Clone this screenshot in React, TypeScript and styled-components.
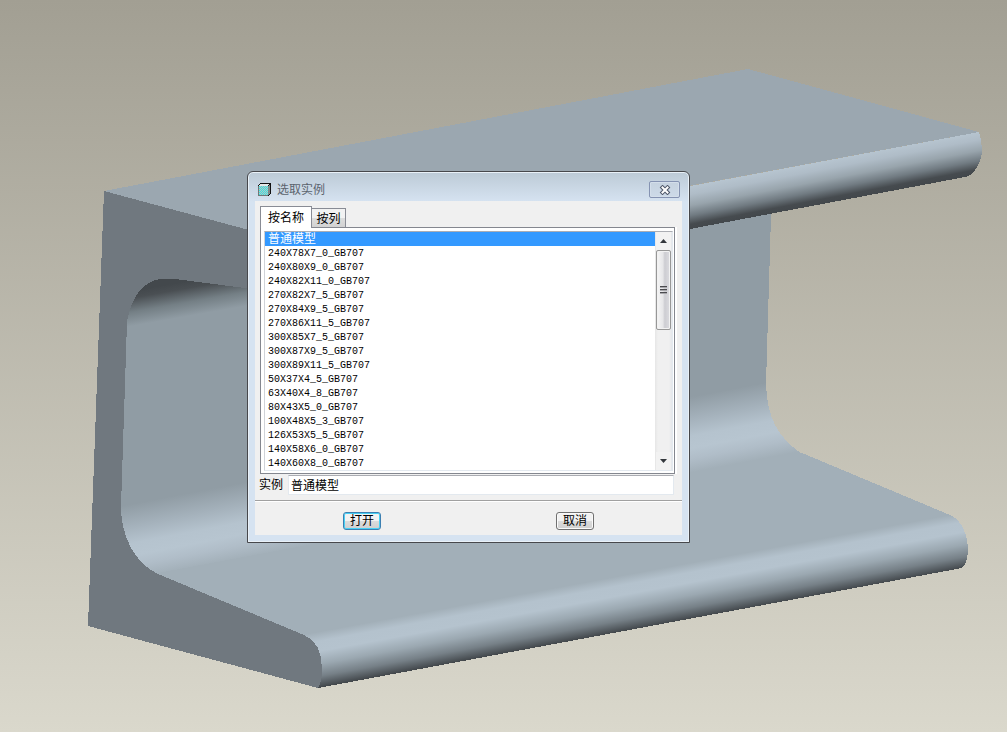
import React, { useState } from "react";
import styled, { createGlobalStyle } from "styled-components";

const GlobalStyle = createGlobalStyle`
  * { box-sizing: border-box; }
  html, body { margin: 0; padding: 0; }
  body, button, input {
    font-family: "Liberation Sans", "Noto Sans CJK SC", sans-serif;
    font-size: 12px;
    color: #000;
  }
`;

const Workspace = styled.main`
  position: relative;
  min-height: 100vh;
  overflow: hidden;
  background: linear-gradient(#a29f93, #dad8cc);
`;

const Viewport = styled.svg`
  position: absolute;
  inset: 0;
  width: 100%;
  height: 100%;
`;

const Dialog = styled.section`
  position: absolute;
  left: 247px;
  top: 171px;
  width: 443px;
  display: flex;
  flex-direction: column;
  padding: 0 6px 6px;
  border: 1px solid #47484c;
  border-radius: 6px 6px 0 0;
  background: linear-gradient(#bccad6, #d6e3f1 30px);
  box-shadow: inset 0 0 0 1px #e9f1f8;
`;

const TitleBar = styled.header`
  display: flex;
  align-items: center;
  gap: 5px;
  height: 29px;
  padding: 6px 3px 0 3px;
`;

const Title = styled.h1`
  flex: 1;
  margin: 0;
  font-size: 12px;
  line-height: 16px;
  font-weight: 400;
  color: #5b646e;
`;

const CloseButton = styled.button`
  display: flex;
  align-items: center;
  justify-content: center;
  width: 31px;
  height: 17px;
  padding: 0;
  border: 1px solid #8593b2;
  border-radius: 2px;
  background: linear-gradient(#c5d2df, #cddae8);
  box-shadow: inset 0 0 0 1px #d3deea;
`;

const Body = styled.div`
  display: flex;
  flex-direction: column;
  margin: 0 1px 1px;
  background: #f0f0f0;
`;

const Tabs = styled.div`
  display: flex;
  align-items: flex-end;
  padding: 5px 5px 0;
`;

const Tab = styled.button<{ $active: boolean }>`
  position: relative;
  z-index: ${(p) => (p.$active ? 1 : 0)};
  height: ${(p) => (p.$active ? 22 : 19)}px;
  width: ${(p) => (p.$active ? 52 : 34)}px;
  margin: 0 0 ${(p) => (p.$active ? -1 : 0)}px;
  padding: ${(p) => (p.$active ? 0 : 2)}px 0 0;
  line-height: 16px;
  border: 1px solid #898c95;
  border-bottom-width: 0;
  border-left-width: ${(p) => (p.$active ? 1 : 0)}px;
  background: ${(p) => (p.$active ? "#fff" : "linear-gradient(#f2f2f2 50%, #dddddd 50%, #d2d2d2)")};
`;

const Panel = styled.div`
  margin: 0 7px 0 5px;
  padding: 3px 1px 2px 3px;
  border: 1px solid #84878f;
  background: #fff;
  box-shadow: 1px 0 #fff, 2px 0 #fff;
`;

const ListFrame = styled.div`
  display: flex;
  height: 240px;
  border: 1px solid #e3e9ef;
  border-top-color: #abadb3;
  border-left-color: #d0d3d8;
`;

const List = styled.ul`
  flex: 1;
  margin: 0;
  padding: 0;
  overflow: hidden;
  list-style: none;
`;

const Item = styled.li<{ $selected: boolean }>`
  height: 14px;
  padding-left: 3px;
  font-family: "Liberation Mono", "Noto Sans CJK SC", monospace;
  font-size: ${(p) => (p.$selected ? 12 : 10)}px;
  line-height: 16px;
  white-space: nowrap;
  cursor: default;
  color: ${(p) => (p.$selected ? "#fff" : "#000")};
  background: ${(p) => (p.$selected ? "#3399ff" : "transparent")};
`;

const ScrollBar = styled.div`
  display: flex;
  flex-direction: column;
  width: 17px;
  padding: 0 1px;
  background: linear-gradient(90deg, #e6e6e6, #f0f0f0 3px, #f0f0f0 14px, #e4e6ea);
`;

const ArrowButton = styled.button`
  display: flex;
  align-items: center;
  justify-content: center;
  height: 18px;
  padding: 0;
  border: 0;
  background: #f2f2f2;
`;

const Track = styled.div`
  flex: 1;
`;

const Thumb = styled.div`
  display: flex;
  align-items: center;
  justify-content: center;
  height: 80px;
  border: 1px solid #979797;
  border-radius: 2px;
  background: linear-gradient(90deg, #f6f6f6, #e6e6e8 45%, #cdcdd2 60%, #dcdce0);
  box-shadow: inset 0 0 0 1px #f2f2f2;
`;

const Field = styled.div`
  display: flex;
  align-items: center;
  gap: 5px;
  padding: 1px 8px 5px 4px;
`;

const FieldLabel = styled.label`
  line-height: 20px;
`;

const NameInput = styled.input`
  flex: 1;
  min-width: 0;
  height: 20px;
  padding: 0 2px 2px;
  border: 1px solid #e3e9ef;
  border-top-color: #abadb3;
  background: #fff;
  outline: none;
`;

const Footer = styled.footer`
  display: flex;
  justify-content: space-between;
  padding: 11px 88px 5px;
  border-top: 1px solid #a0a0a0;
  box-shadow: inset 0 1px #fff;
`;

const ActionButton = styled.button<{ $primary?: boolean }>`
  width: 38px;
  height: 18px;
  padding: 0;
  line-height: 16px;
  border: 1px solid ${(p) => (p.$primary ? "#3c7fb1" : "#707070")};
  border-radius: 3px;
  background: linear-gradient(#f2f2f2 50%, #dcdcdc 50%, #d0d0d0);
  box-shadow: inset 0 0 0 1px ${(p) => (p.$primary ? "#48d1f5" : "#fafafa")};
`;

const instances = [
  "普通模型",
  "240X78X7_0_GB707",
  "240X80X9_0_GB707",
  "240X82X11_0_GB707",
  "270X82X7_5_GB707",
  "270X84X9_5_GB707",
  "270X86X11_5_GB707",
  "300X85X7_5_GB707",
  "300X87X9_5_GB707",
  "300X89X11_5_GB707",
  "50X37X4_5_GB707",
  "63X40X4_8_GB707",
  "80X43X5_0_GB707",
  "100X48X5_3_GB707",
  "126X53X5_5_GB707",
  "140X58X6_0_GB707",
  "140X60X8_0_GB707",
];

function ChannelModel() {
  return (
    <Viewport viewBox="0 0 1007 732" preserveAspectRatio="xMidYMid slice" shapeRendering="crispEdges" aria-hidden="true">
      <defs>
        <linearGradient id="innerFillet" gradientUnits="userSpaceOnUse" x1="690" y1="397" x2="704" y2="470">
          <stop offset="0" stopColor="#909ca4" />
          <stop offset="0.3" stopColor="#a5b2bc" />
          <stop offset="0.52" stopColor="#b5c3ce" />
          <stop offset="0.68" stopColor="#b7c5d0" />
          <stop offset="0.82" stopColor="#b0bdc8" />
          <stop offset="1" stopColor="#a2afb8" />
        </linearGradient>
        <linearGradient id="lowerTip" gradientUnits="userSpaceOnUse" x1="690" y1="563" x2="700" y2="617">
          <stop offset="0" stopColor="#a2afb8" />
          <stop offset="0.17" stopColor="#b4c2cd" />
          <stop offset="0.35" stopColor="#b5c3ce" />
          <stop offset="0.58" stopColor="#9ba8b1" />
          <stop offset="0.8" stopColor="#768087" />
          <stop offset="1" stopColor="#42474b" />
        </linearGradient>
        <linearGradient id="upperTip" gradientUnits="userSpaceOnUse" x1="690" y1="186" x2="698" y2="228">
          <stop offset="0" stopColor="#b7c5d0" />
          <stop offset="0.2" stopColor="#afbcc7" />
          <stop offset="0.45" stopColor="#98a4ac" />
          <stop offset="0.68" stopColor="#717b82" />
          <stop offset="0.88" stopColor="#464b4f" />
          <stop offset="1" stopColor="#42474b" />
        </linearGradient>
        <linearGradient id="topFillet" gradientUnits="userSpaceOnUse" x1="160" y1="286" x2="166" y2="320">
          <stop offset="0" stopColor="#43484c" />
          <stop offset="0.2" stopColor="#4a4f53" />
          <stop offset="0.6" stopColor="#747f85" />
          <stop offset="1" stopColor="#909ca4" />
        </linearGradient>
      </defs>
      <path fill="#909ca4" d="M104 220L600 205H772L771 215L766 384L760 410L121 530Z" />
      <path fill="url(#topFillet)" d="M120 250H260V308L120 334Z" />
      <path fill="url(#innerFillet)" d="M121 503L766 383C767 416 776 436 802 454L158 575L118 560Z" />
      <path fill="#a2afb8" d="M158 573L802 453L950 515L305 637L300 650L158 585Z" />
      <path fill="url(#lowerTip)" d="M303 635L950 515C962 520 968 535 968 552C967 560 965 566 962 568L318 688L318 660Z" />
      <path fill="#9ba7b0" d="M104 191L748 69L979 132L247 268Z" />
      <path fill="url(#upperTip)" d="M600 203L979 132C984 147 982 160 977 167C974 173 970 176 965 177L600 246Z" />
      <path
        fill="#70787f"
        d="M104 191L88 626L318 688Q322 682 322 670C322 651 316 640 304 635L158 574C134 563 121 535 121 507L127 322C131 295 145 281 160 279L175 279L260 290V233Z"
      />
    </Viewport>
  );
}

function PartIcon() {
  return (
    <svg width="15" height="15" viewBox="0 0 15 15" shapeRendering="crispEdges" aria-hidden="true">
      <defs>
        <pattern id="dither" width="2" height="2" patternUnits="userSpaceOnUse">
          <rect width="2" height="2" fill="#c0c0c0" />
          <rect width="1" height="1" fill="#2ee6e6" />
          <rect x="1" y="1" width="1" height="1" fill="#2ee6e6" />
        </pattern>
      </defs>
      <path d="M3 1H14V11L11 14H1V4Z" fill="#111" />
      <path d="M3 2H12L11 4H2V3Z" fill="#e4e8e8" />
      <path d="M11 4L13 2V11L11 13Z" fill="#808888" />
      <rect x="2" y="4" width="9" height="9" fill="url(#dither)" />
      <path d="M1 4H2V13H11V14H1Z" fill="#707878" />
    </svg>
  );
}

export default function App() {
  const [selected, setSelected] = useState(instances[0]);
  return (
    <Workspace>
      <GlobalStyle />
      <ChannelModel />
      <Dialog role="dialog" aria-labelledby="dialog-title">
        <TitleBar>
          <PartIcon />
          <Title id="dialog-title">选取实例</Title>
          <CloseButton aria-label="关闭">
            <svg width="12" height="10" viewBox="0 0 12 10" aria-hidden="true">
              <path d="M3.500 2.500L8.500 7.500M8.500 2.500L3.500 7.500" stroke="#4e5768" strokeWidth="4" strokeLinecap="square" />
              <path d="M3.500 2.500L8.500 7.500M8.500 2.500L3.500 7.500" stroke="#fff" strokeWidth="2" strokeLinecap="square" />
            </svg>
          </CloseButton>
        </TitleBar>
        <Body>
          <Tabs role="tablist">
            <Tab role="tab" aria-selected="true" $active>按名称</Tab>
            <Tab role="tab" aria-selected="false" $active={false}>按列</Tab>
          </Tabs>
          <Panel role="tabpanel">
            <ListFrame>
              <List role="listbox" aria-label="实例列表">
                {instances.map((name) => (
                  <Item
                    key={name}
                    role="option"
                    aria-selected={name === selected}
                    $selected={name === selected}
                    onClick={() => setSelected(name)}
                  >
                    {name}
                  </Item>
                ))}
              </List>
              <ScrollBar>
                <ArrowButton aria-label="向上滚动">
                  <svg width="7" height="4" viewBox="0 0 7 4" aria-hidden="true"><path d="M0 4L3.500 0L7 4Z" fill="#33373c" /></svg>
                </ArrowButton>
                <Track>
                  <Thumb>
                    <svg width="7" height="8" viewBox="0 0 7 8" shapeRendering="crispEdges" aria-hidden="true">
                      <path d="M0 1.500H7M0 4.500H7M0 7.500H7" stroke="#a8a8ac" />
                      <path d="M0 .5H7M0 3.500H7M0 6.500H7" stroke="#4c4c50" />
                    </svg>
                  </Thumb>
                </Track>
                <ArrowButton aria-label="向下滚动">
                  <svg width="7" height="4" viewBox="0 0 7 4" aria-hidden="true"><path d="M0 0L3.500 4L7 0Z" fill="#33373c" /></svg>
                </ArrowButton>
              </ScrollBar>
            </ListFrame>
          </Panel>
          <Field>
            <FieldLabel htmlFor="instance-name">实例</FieldLabel>
            <NameInput id="instance-name" value={selected} onChange={(e) => setSelected(e.target.value)} />
          </Field>
          <Footer>
            <ActionButton $primary>打开</ActionButton>
            <ActionButton>取消</ActionButton>
          </Footer>
        </Body>
      </Dialog>
    </Workspace>
  );
}
